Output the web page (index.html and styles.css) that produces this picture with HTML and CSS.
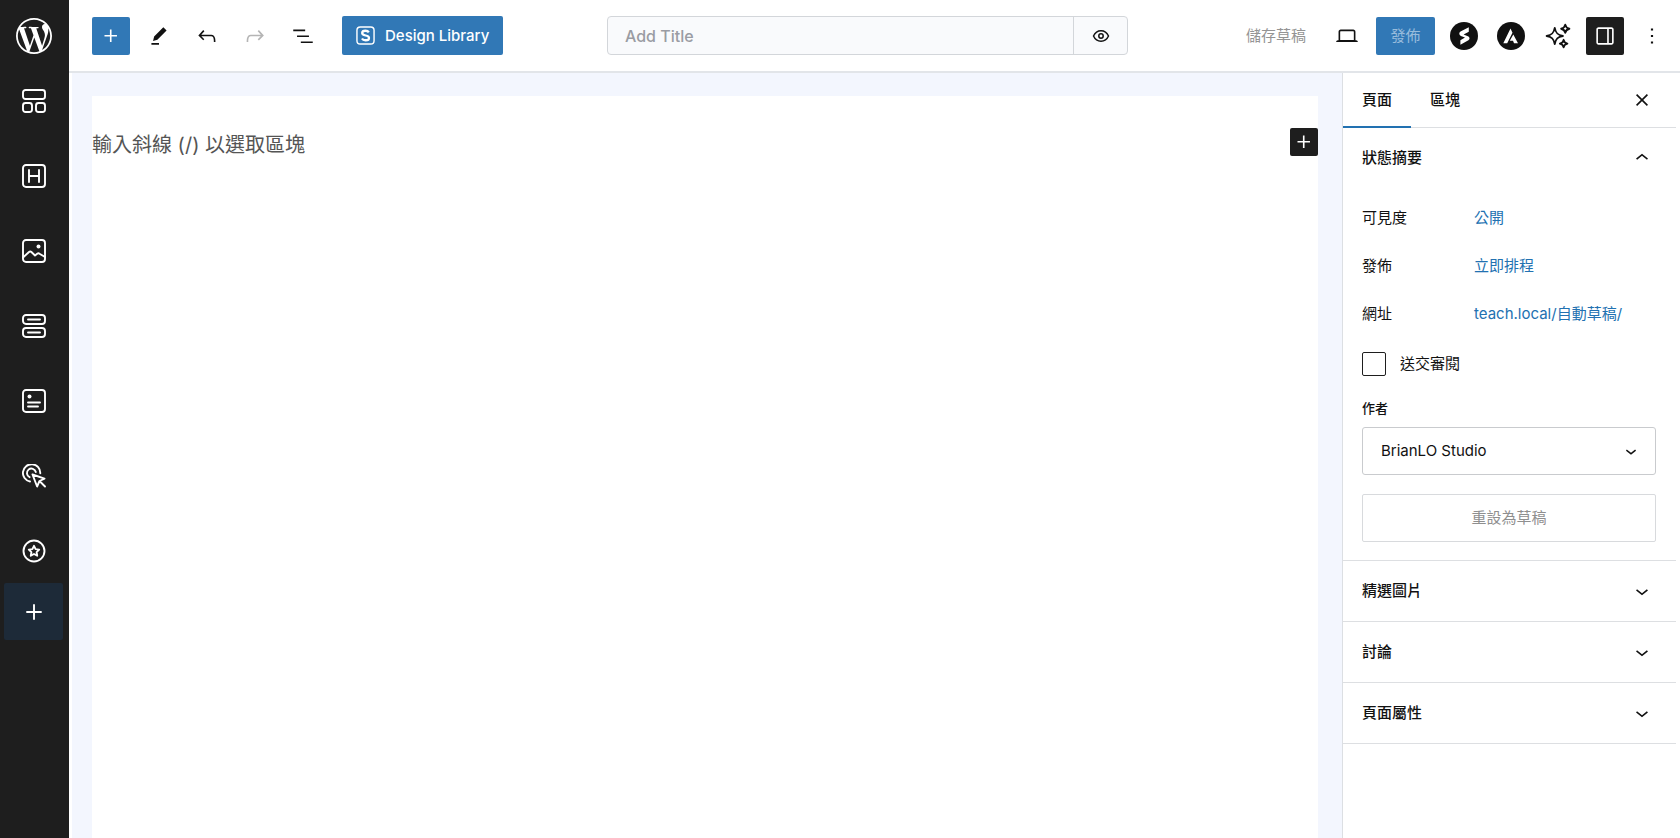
FILE: index.html
```html
<!DOCTYPE html>
<html lang="zh-Hant">
<head>
<meta charset="utf-8">
<meta name="viewport" content="width=device-width, initial-scale=1">
<title>Add Title</title>
<link rel="stylesheet" href="styles.css">
</head>
<body>
<div class="app">
  <nav class="rail" aria-label="Quick access">
    <a class="rail-logo" href="#" aria-label="WordPress">
      <svg viewBox="0 0 24 24"><path d="M21.469 6.825c.84 1.537 1.318 3.3 1.318 5.175 0 3.979-2.156 7.456-5.363 9.325l3.295-9.527c.615-1.54.82-2.771.82-3.864 0-.405-.026-.78-.07-1.11m-7.981.105c.647-.03 1.232-.105 1.232-.105.582-.075.514-.93-.067-.899 0 0-1.755.135-2.88.135-1.064 0-2.85-.15-2.85-.15-.585-.03-.661.855-.075.885 0 0 .54.061 1.125.09l1.68 4.605-2.37 7.08L5.354 6.9c.649-.03 1.234-.1 1.234-.1.585-.075.516-.93-.065-.896 0 0-1.746.138-2.874.138-.2 0-.438-.008-.69-.015C4.911 3.15 8.235 1.215 12 1.215c2.809 0 5.365 1.072 7.286 2.833-.046-.003-.091-.009-.141-.009-1.06 0-1.812.923-1.812 1.914 0 .89.513 1.643 1.06 2.531.411.72.89 1.643.89 2.977 0 .915-.354 1.994-.821 3.479l-1.075 3.585-3.9-11.61.001.014zM12 22.784c-1.059 0-2.081-.153-3.048-.437l3.237-9.406 3.315 9.087c.024.053.05.101.078.149-1.12.393-2.325.609-3.582.609M1.211 12c0-1.564.336-3.05.935-4.39L7.29 21.709C3.694 19.96 1.212 16.271 1.211 12M12 0C5.385 0 0 5.385 0 12s5.385 12 12 12 12-5.385 12-12S18.615 0 12 0"/></svg>
    </a>
    <div class="rail-items">
      <button class="rail-item" aria-label="Container"><svg viewBox="0 0 24 24"><rect x="1" y="1" width="22" height="9" rx="2.5"/><rect x="1" y="14" width="9" height="9" rx="2.5"/><rect x="14" y="14" width="9" height="9" rx="2.5"/></svg></button>
      <button class="rail-item" aria-label="Heading"><svg viewBox="0 0 24 24"><rect x="1" y="1" width="22" height="22" rx="3"/><path d="M7 6v12M17 6v12M7 12h10"/></svg></button>
      <button class="rail-item" aria-label="Image"><svg viewBox="0 0 24 24"><rect x="1" y="1" width="22" height="22" rx="3"/><path d="M1 18.500l6-5.500c.8-.7 1.700-.7 2.400 0l3.600 3.500 2.200-1.700c.8-.6 1.600-.6 2.300 0L23 18"/><circle class="dot" cx="16.500" cy="7.500" r="2"/></svg></button>
      <button class="rail-item" aria-label="Buttons"><svg viewBox="0 0 24 24"><rect x="1" y="1" width="22" height="9" rx="3"/><rect x="1" y="14" width="22" height="9" rx="3"/><path d="M6 5.500h12M6 18.500h12"/></svg></button>
      <button class="rail-item" aria-label="Info box"><svg viewBox="0 0 24 24"><rect x="1" y="1" width="22" height="22" rx="3"/><path d="M6 13.500h12M6 17.500h10"/><circle class="dot" cx="7.500" cy="7.500" r="2"/></svg></button>
      <button class="rail-item" aria-label="Call to action"><svg viewBox="0 0 24 24"><path d="M8 17.500A8.700 8.700 0 1 1 18.300 9.300"/><path d="M7.600 13.200A4.500 4.500 0 1 1 13.800 8"/><path d="M10.500 10.500l12 4.200-5 2.300-2.400 5.500zM18 17.500l5 5"/></svg></button>
      <button class="rail-item" aria-label="Icon"><svg viewBox="0 0 24 24"><circle cx="12" cy="12" r="10.500"/><path d="M12 6.800l1.600 3.300 3.600.5-2.600 2.500.6 3.600-3.200-1.700-3.200 1.700.6-3.600-2.600-2.500 3.600-.5z"/></svg></button>
    </div>
    <button class="rail-item rail-add" aria-label="Add"><svg viewBox="0 0 24 24"><path d="M12 5v14M5 12h14"/></svg></button>
  </nav>

  <div class="editor">
    <header class="topbar">
      <div class="tools">
        <button class="tool primary" aria-label="Add block"><svg viewBox="0 0 24 24"><path d="M11 12.500V17.500H12.500V12.500H17.500V11H12.500V6H11V11H6V12.500H11Z"/></svg></button>
        <button class="tool" aria-label="Edit"><svg viewBox="0 0 24 24"><path d="m19 7-3-3-8.500 8.500-1 4 4-1L19 7Zm-7 11.500H5V20h7v-1.500Z"/></svg></button>
        <button class="tool" aria-label="Undo"><svg viewBox="0 0 24 24"><path d="M18.300 11.700c-.6-.6-1.400-.9-2.300-.9H6.700l2.900-3.300-1.100-1-4.500 5L8.500 16l1-1-2.700-2.700H16c.5 0 .9.2 1.300.5 1 1 1 3.400 1 4.500v.3h1.500v-.2c0-1.500 0-4.300-1.500-5.700z"/></svg></button>
        <button class="tool" aria-label="Redo" disabled><svg viewBox="0 0 24 24"><path d="M15.600 6.500l-1.100 1 2.900 3.300H8c-.9 0-1.700.3-2.300.9-1.400 1.500-1.400 4.200-1.400 5.600v.2h1.500v-.3c0-1.100 0-3.500 1-4.500.3-.3.7-.5 1.300-.5h9.200L14.500 15l1.100 1.100 4.600-4.600-4.600-5z"/></svg></button>
        <button class="tool" aria-label="List view"><svg viewBox="0 0 24 24"><path d="M3 6h11v1.500H3V6Zm3.500 5.500h11V13h-11v-1.500ZM21 17H10v1.500h11V17Z"/></svg></button>
        <button class="library"><svg viewBox="0 0 20 20"><rect class="line" x="1" y="1" width="18" height="18" rx="3.500"/><path class="line thick" d="M13.500 6.600C12.800 5.500 11.500 5 10 5 8 5 6.500 5.900 6.500 7.400c0 3.500 7.200 1.700 7.200 5.100 0 1.600-1.500 2.500-3.600 2.500-1.700 0-3.100-.6-3.800-1.900"/></svg>Design Library</button>
      </div>

      <div class="title-box">
        <input class="title-input" type="text" placeholder="Add Title" aria-label="Title">
        <button class="preview" aria-label="Preview"><svg viewBox="0 0 18 18"><path d="M1.500 9C3 5.700 5.800 3.800 9 3.800S15 5.700 16.500 9C15 12.300 12.200 14.200 9 14.200S3 12.300 1.500 9z"/><circle cx="9" cy="9" r="2.200"/></svg></button>
      </div>

      <div class="actions">
        <button class="save" disabled>儲存草稿</button>
        <button class="tool view" aria-label="View"><svg viewBox="0 0 24 24"><path d="M20.500 16h-.7V8c0-1.100-.9-2-2-2H6.200c-1.100 0-2 .9-2 2v8h-.7c-.8 0-1.500.7-1.500 1.500h20c0-.8-.7-1.500-1.500-1.500zM5.700 8c0-.3.2-.5.5-.5h11.600c.3 0 .5.2.5.5v7.600H5.700V8z"/></svg></button>
        <button class="publish">發佈</button>
        <button class="tool round" aria-label="Spectra"><svg viewBox="0 0 28 28"><circle cx="14" cy="14" r="14"/><path class="cut" d="M18.800 5.300v4.500l-5.200 2.800 4.300 1.600c2 .8 2.200 3 .5 4l-8 4.500v-4.500l4.600-2.600-4.100-1.700c-2-.9-2.200-3.300-.4-4.400z"/></svg></button>
        <button class="tool round" aria-label="Astra"><svg viewBox="0 0 28 28"><circle cx="14" cy="14" r="14"/><path class="cut" d="M13.500 6.500l2 4.200-5.300 10.500H6.300zM16.300 12.500l4.700 8.700h-4l-1-2.400h-3.200z"/></svg></button>
        <button class="tool" aria-label="AI assistant"><svg class="sparkle" viewBox="0 0 24 24"><path d="M9 4.500c.8 4.800 2.700 6.700 7.500 7.500-4.800.8-6.700 2.700-7.500 7.500-.8-4.800-2.700-6.700-7.500-7.500C6.300 11.200 8.200 9.300 9 4.500zM18.700 1.500c.5 2.400 1.400 3.300 3.800 3.800-2.400.5-3.300 1.400-3.800 3.800-.5-2.400-1.400-3.300-3.800-3.800 2.400-.5 3.300-1.400 3.800-3.800zM17.200 15.500c.4 2.200 1.300 3 3.500 3.500-2.200.5-3.100 1.300-3.500 3.500-.4-2.200-1.300-3-3.500-3.500 2.200-.5 3.100-1.300 3.500-3.500z"/></svg></button>
        <button class="tool active" aria-label="Settings" aria-pressed="true"><svg viewBox="0 0 24 24"><path d="M18 4H6c-1.100 0-2 .9-2 2v12c0 1.100.9 2 2 2h12c1.100 0 2-.9 2-2V6c0-1.100-.9-2-2-2zm-4 14.500H6c-.3 0-.5-.2-.5-.5V6c0-.3.2-.5.5-.5h8v13zm4.500-.5c0 .3-.2.5-.5.5h-2.500v-13H18c.3 0 .5.2.5.5v12z"/></svg></button>
        <button class="tool" aria-label="Options"><svg viewBox="0 0 24 24"><path d="M13 19h-2v-2h2v2zm0-6h-2v-2h2v2zm0-6h-2V5h2v2z"/></svg></button>
      </div>
    </header>

    <div class="workspace">
      <main class="canvas">
        <div class="page">
          <p class="prompt">輸入斜線 (/) 以選取區塊</p>
          <button class="inserter" aria-label="Add block"><svg viewBox="0 0 24 24"><path d="M11 12.500V17.500H12.500V12.500H17.500V11H12.500V6H11V11H6V12.500H11Z"/></svg></button>
        </div>
      </main>

      <aside class="settings">
        <div class="tabs">
          <button class="tab selected">頁面</button>
          <button class="tab">區塊</button>
          <button class="close" aria-label="Close"><svg viewBox="0 0 24 24"><path d="M7 7l10 10M17 7L7 17"/></svg></button>
        </div>

        <section class="panel">
          <button class="panel-head" aria-expanded="true">狀態摘要<svg viewBox="0 0 24 24"><path d="M6.500 12.400L12 8l5.500 4.400-.9 1.200L12 10l-4.500 3.600-1-1.200z"/></svg></button>
          <div class="panel-body">
            <dl class="facts">
              <dt>可見度</dt><dd><a href="#">公開</a></dd>
              <dt>發佈</dt><dd><a href="#">立即排程</a></dd>
              <dt>網址</dt><dd><a href="#">teach.local/自動草稿/</a></dd>
            </dl>
            <div class="review">
              <input type="checkbox" id="review">
              <label for="review">送交審閱</label>
            </div>
            <label class="author-label" for="author">作者</label>
            <div class="select-wrap">
              <select id="author"><option>BrianLO Studio</option></select>
              <svg class="select-arrow" viewBox="0 0 24 24"><path d="M17.500 11.600L12 16l-5.500-4.400.9-1.200L12 14l4.500-3.600 1 1.200z"/></svg>
            </div>
            <button class="reset" disabled>重設為草稿</button>
          </div>
        </section>
        <section class="panel"><button class="panel-head">精選圖片<svg viewBox="0 0 24 24"><path d="M17.500 11.600L12 16l-5.500-4.400.9-1.200L12 14l4.500-3.600 1 1.200z"/></svg></button></section>
        <section class="panel"><button class="panel-head">討論<svg viewBox="0 0 24 24"><path d="M17.500 11.600L12 16l-5.500-4.400.9-1.200L12 14l4.500-3.600 1 1.200z"/></svg></button></section>
        <section class="panel"><button class="panel-head">頁面屬性<svg viewBox="0 0 24 24"><path d="M17.500 11.600L12 16l-5.500-4.400.9-1.200L12 14l4.500-3.600 1 1.200z"/></svg></button></section>
      </aside>
    </div>
  </div>
</div>
</body>
</html>
```
FILE: styles.css
```css
*, *::before, *::after { box-sizing: border-box; }

body {
  margin: 0;
  background: #fff;
  color: #111;
  font: 15px/20px Inter, "Noto Sans CJK TC", sans-serif;
}

button, input, select { font: inherit; color: inherit; }
button { padding: 0; border: 0; border-radius: 2px; background: none; }
a { color: #2271b1; text-decoration: none; }
svg { display: block; flex: none; width: 26px; height: 26px; fill: currentColor; }

.app { display: flex; min-height: 100vh; }

/* Left rail */
.rail {
  flex: none;
  display: flex;
  flex-direction: column;
  width: 69px;
  padding: 0 6px 0 4px;
  background: #1e1e1e;
  color: #fff;
}
.rail-logo { display: flex; align-items: center; justify-content: center; height: 72px; color: #fff; }
.rail-logo svg { width: 36px; height: 36px; }
.rail-items { display: flex; flex-direction: column; gap: 18px; }
.rail-item { display: flex; align-items: center; justify-content: center; width: 100%; height: 57px; }
.rail-item svg {
  width: 24px;
  height: 24px;
  fill: none;
  stroke: currentColor;
  stroke-width: 1.9;
  stroke-linecap: round;
  stroke-linejoin: round;
}
.rail-item .dot { fill: currentColor; stroke: none; }
.rail-add { margin-top: 4px; background: #1d2a38; }

/* Top bar */
.editor { flex: 1; min-width: 0; display: flex; flex-direction: column; }
.topbar {
  display: flex;
  align-items: center;
  justify-content: space-between;
  height: 73px;
  padding: 0 9px 0 23px;
  border-bottom: 2px solid #e2e5e9;
}
.tools, .actions { display: flex; align-items: center; }
.tools { flex: 1 1 0; gap: 10px; }
.actions { flex: 1 1 28px; gap: 9px; justify-content: flex-end; }
.tool { flex: none; display: flex; align-items: center; justify-content: center; width: 38px; height: 38px; }
.tool:disabled { color: #b5b5b5; }
.primary, .library, .publish { background: #3178b6; color: #fff; }
.active { background: #1e1e1e; color: #fff; }
.library {
  display: flex;
  align-items: center;
  gap: 10px;
  height: 39px;
  margin-left: 10px;
  padding: 0 14px;
  font-weight: 500;
  white-space: nowrap;
}
.library svg { width: 19px; height: 19px; }
.line { fill: none; stroke: currentColor; stroke-width: 1.5; }
.thick { stroke-width: 2.4; }

.title-box {
  flex: 0 1 521px;
  display: flex;
  height: 39px;
  border: 1px solid #d3d6da;
  border-radius: 4px;
  background: #f9fafc;
}
.title-input {
  flex: 1;
  min-width: 0;
  padding: 0 17px;
  border: 0;
  background: none;
  font-size: 16px;
  font-weight: 500;
}
.title-input::placeholder { color: #9a9ca3; opacity: 1; }
.preview {
  display: flex;
  align-items: center;
  justify-content: center;
  width: 54px;
  border-left: 1px solid #d3d6da;
  border-radius: 0;
}
.preview svg { width: 18px; height: 18px; fill: none; stroke: currentColor; stroke-width: 1.5; }

.save { margin-right: 13px; color: #949494; white-space: nowrap; }
.publish { width: 59px; height: 38px; margin: 0 1px; color: #98bcdc; }
.round svg { width: 28px; height: 28px; }
.cut { fill: #fff; }
.sparkle { fill: none; stroke: currentColor; stroke-width: 1.7; stroke-linejoin: round; }

/* Canvas */
.workspace { flex: 1; display: flex; }
.canvas {
  flex: 1;
  min-width: 0;
  display: flex;
  margin-left: 3px;
  padding: 23px 24px 0 20px;
  background: #f3f6fe;
}
.page {
  flex: 1;
  display: flex;
  align-items: flex-start;
  justify-content: space-between;
  padding-top: 32px;
  background: #fff;
}
.prompt { margin: 0; color: #555; font-size: 20px; line-height: 34px; }
.inserter {
  display: flex;
  align-items: center;
  justify-content: center;
  width: 28px;
  height: 28px;
  background: #1e1e1e;
  color: #fff;
}

/* Settings sidebar */
.settings { flex: none; width: 338px; padding-right: 4px; border-left: 1px solid #dcdfe3; }
.tabs { display: flex; height: 55px; border-bottom: 1px solid #dddfe2; }
.tab { height: 55px; padding: 0 19px; font-weight: 500; border-bottom: 2px solid transparent; border-radius: 0; }
.selected { border-bottom-color: #2271b1; }
.close { width: 26px; margin: 0 21px 0 auto; }
.close svg { fill: none; stroke: currentColor; stroke-width: 1.5; }

.panel { border-bottom: 1px solid #dddfe2; }
.panel-head {
  display: flex;
  align-items: center;
  justify-content: space-between;
  width: 100%;
  height: 60px;
  padding: 0 21px 0 19px;
  font-weight: 500;
}
.panel-body { display: flex; flex-direction: column; padding: 6px 20px 18px 19px; }
.facts { display: grid; grid-template-columns: 112px 1fr; margin: 0; line-height: 48px; }
.facts dd { margin: 0; }
.review { display: flex; align-items: center; gap: 14px; margin-top: 14px; }
.review input {
  appearance: none;
  width: 24px;
  height: 24px;
  margin: 0;
  border: 1px solid #1e1e1e;
  border-radius: 2px;
}
.author-label { margin: 22px 0 9px; font-size: 13px; font-weight: 500; }
.select-wrap { position: relative; }
.select-wrap select {
  appearance: none;
  display: block;
  width: 100%;
  height: 48px;
  padding: 0 40px 0 18px;
  border: 1px solid #c9cbce;
  border-radius: 3px;
  background: #fff;
}
.select-arrow {
  position: absolute;
  top: 13px;
  right: 14px;
  width: 22px;
  height: 22px;
  pointer-events: none;
}
.reset { height: 48px; margin-top: 19px; border: 1px solid #d8dadd; color: #8f8f8f; }
```
